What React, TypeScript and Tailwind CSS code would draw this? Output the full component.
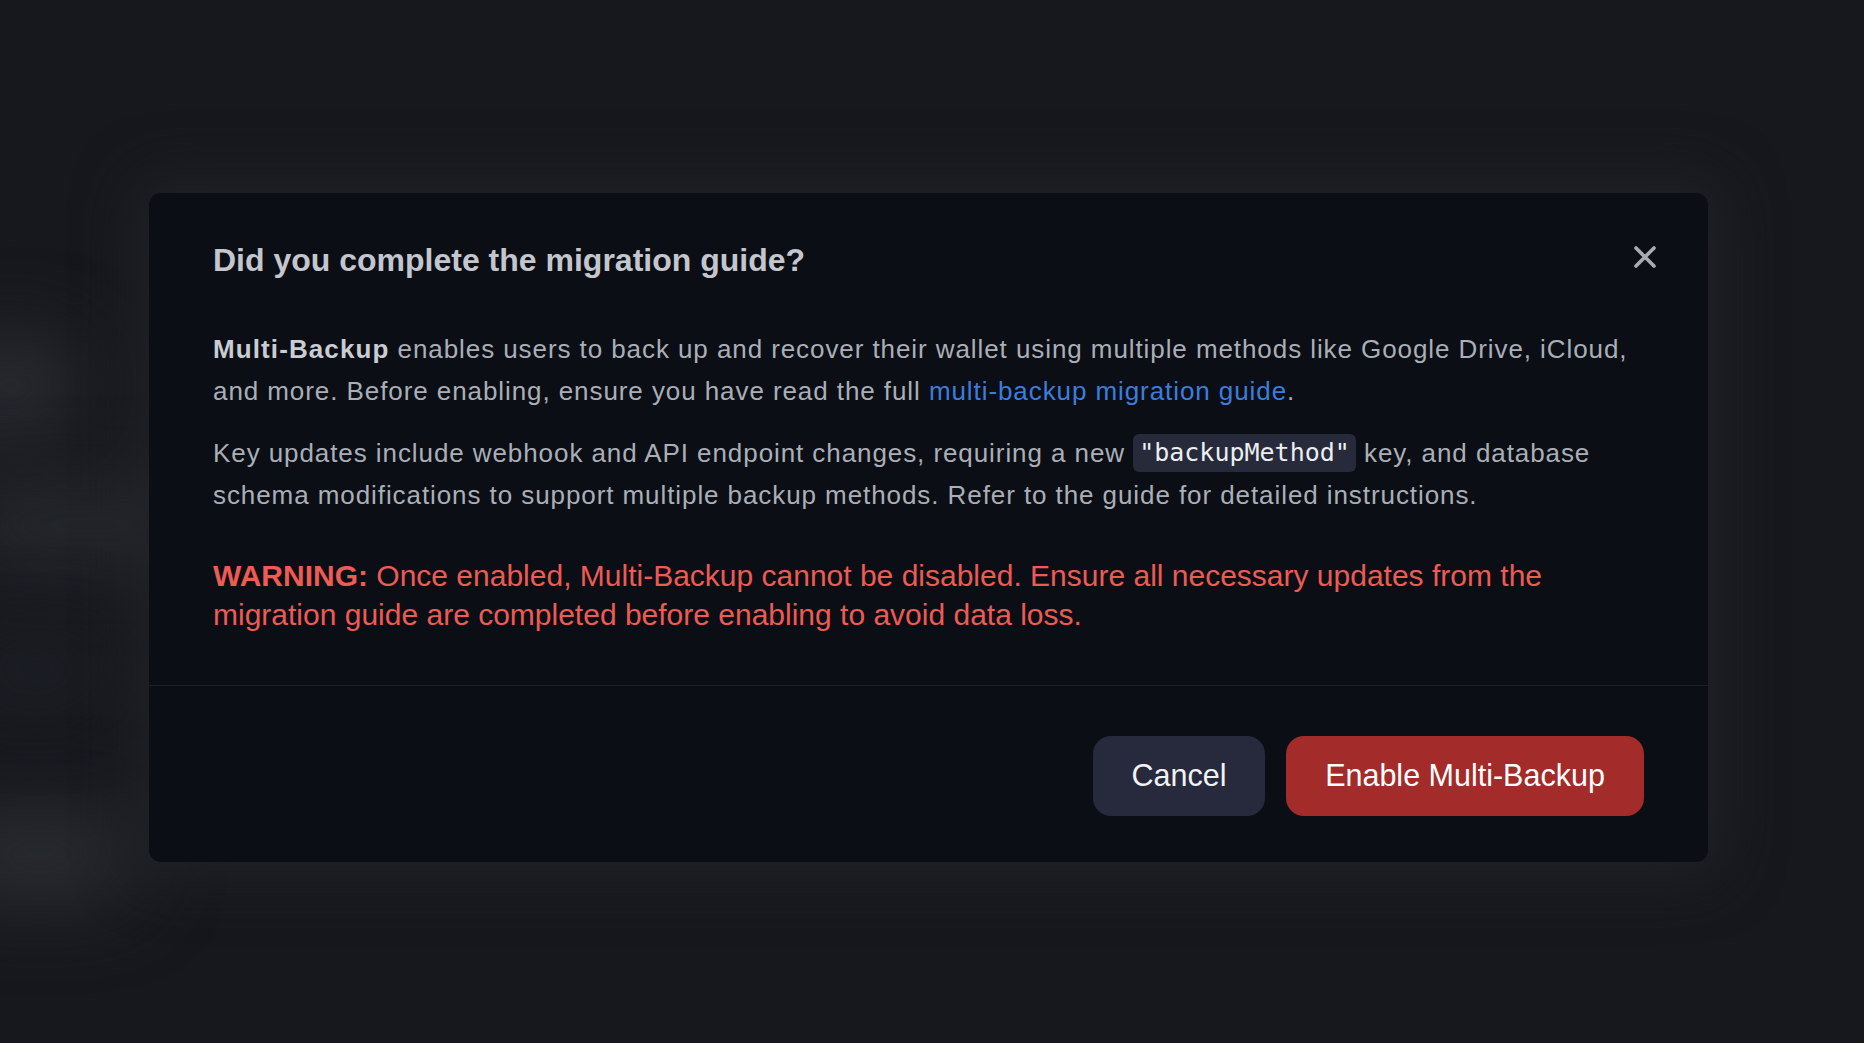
import React from "react";

export default function App() {
  return (
    <div
      className="relative w-full h-[1043px] overflow-hidden bg-[#16181d]"
      style={{ fontFamily: '"Liberation Sans", Arial, sans-serif' }}
    >
      {/* blurred backdrop content */}
      <div className="absolute inset-0 pointer-events-none">
        <div className="absolute left-[-60px] top-[340px] w-[140px] h-[90px] rounded-full bg-[#2c2e34] blur-2xl" />
        <div className="absolute left-[-40px] top-[490px] w-[260px] h-[70px] rounded-full bg-[#2a2c31] blur-2xl" />
        <div className="absolute left-[-60px] top-[810px] w-[200px] h-[90px] rounded-full bg-[#2b2d32] blur-2xl" />
        <div className="absolute left-[-40px] top-[640px] w-[150px] h-[60px] rounded-full bg-[#1e2127] blur-2xl" />
      </div>

      <div className="relative flex justify-start pl-[149px] pt-[193px]">
        <div className="w-[1559px] h-[669px] rounded-[12px] bg-[#0b0e15] shadow-[0_0_60px_12px_rgba(34,36,42,0.9)] flex flex-col">
          {/* header */}
          <div className="flex items-start justify-between pl-[64px] pr-[51px] pt-[47px]">
            <h2 className="text-[32px] leading-[40px] font-bold text-[#c3c6cd]">
              Did you complete the migration guide?
            </h2>
            <button className="mt-[5px] w-[24px] h-[24px] flex items-center justify-center text-[#a8abb2]">
              <svg width="24" height="24" viewBox="0 0 24 24" fill="none">
                <path d="M3 3L21 21M21 3L3 21" stroke="currentColor" strokeWidth="3.6" strokeLinecap="round" />
              </svg>
            </button>
          </div>

          {/* body */}
          <div className="px-[64px] pt-[48px] pb-[51px] text-[26px] leading-[42px] tracking-[0.92px] text-[#aaaeb7]">
            <p>
              <span className="font-bold tracking-[1.1px] text-[#c9ccd3]">Multi-Backup</span> enables users to back
              up and recover their wallet using multiple methods like Google Drive, iCloud, and more. Before enabling,
              ensure you have read the full{" "}
              <a className="text-[#3b7ddd]" href="#">
                multi-backup migration guide
              </a>
              .
            </p>
            <p className="mt-[20px]">
              Key updates include webhook and API endpoint changes, requiring a new{" "}
              <code
                className="inline-block align-middle rounded-[6px] bg-[#262a3b] px-[6px] h-[38px] leading-[38px] text-[25px] tracking-normal text-[#eceef2] -mt-[4px]"
                style={{ fontFamily: '"DejaVu Sans Mono", monospace' }}
              >
                "backupMethod"
              </code>{" "}
              key, and database schema modifications to support multiple backup methods. Refer to the guide for
              detailed instructions.
            </p>
            <p className="mt-[40px] text-[30px] leading-[39px] tracking-normal text-[#ec5b54]">
              <span className="font-bold">WARNING:</span> Once enabled, Multi-Backup cannot be disabled. Ensure all
              necessary updates from the migration guide are completed before enabling to avoid data loss.
            </p>
          </div>

          {/* footer */}
          <div className="border-t border-[#1b2031] flex-1 flex items-center justify-end gap-[21px] px-[64px] pt-[4px]">
            <button className="h-[80px] w-[172px] rounded-[18px] bg-[#262a3c] text-[30.5px] text-[#f1f2f5]">
              Cancel
            </button>
            <button className="h-[80px] w-[358px] rounded-[18px] bg-[#a32b29] text-[30.5px] text-white">
              Enable Multi-Backup
            </button>
          </div>
        </div>
      </div>
    </div>
  );
}
